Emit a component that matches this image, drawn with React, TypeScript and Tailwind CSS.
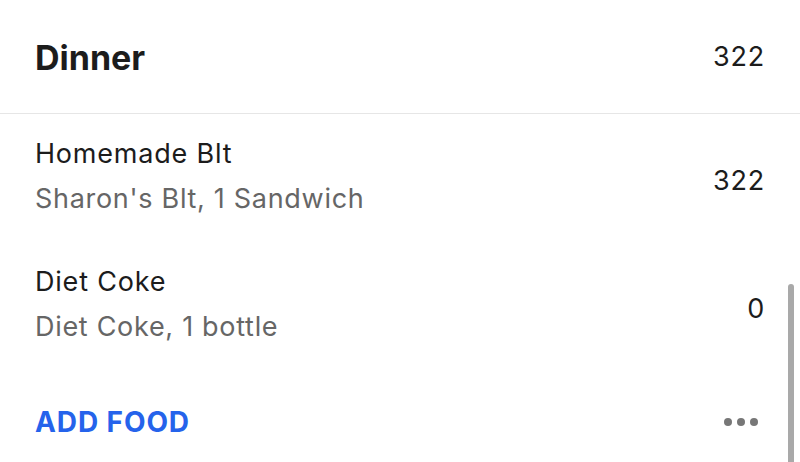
const items = [
  { name: "Homemade Blt", detail: "Sharon's Blt, 1 Sandwich", cals: 322 },
  { name: "Diet Coke", detail: "Diet Coke, 1 bottle", cals: 0 },
];

const App = () => {
  return (
    <div
      className="relative h-[462px] w-[800px] overflow-hidden bg-white text-[#1c1c1c]"
      style={{ fontFamily: "Inter, 'Noto Sans', sans-serif" }}
    >
      <div className="flex h-[114px] items-center justify-between border-b border-[#e6e6e6] pl-[35px] pr-[35px] pt-[2px]">
        <h2 className="text-[34px] font-bold">Dinner</h2>
        <span className="text-[27px] tracking-[0.8px]">322</span>
      </div>

      <div className="flex flex-col">
        {items.map((item) => (
          <div
            key={item.name}
            className="flex h-[128px] items-center justify-between pb-[4px] pl-[35px] pr-[35px]"
          >
            <div className="flex flex-col gap-[13px]">
              <span className="text-[27px] leading-[32px] tracking-[0.8px]">
                {item.name}
              </span>
              <span className="text-[27px] leading-[32px] tracking-[0.7px] text-[#666666]">
                {item.detail}
              </span>
            </div>
            <span className="pt-[10px] text-[27px] tracking-[0.8px]">{item.cals}</span>
          </div>
        ))}
      </div>

      <div className="flex h-[100px] items-center justify-between pl-[35px] pr-[42px] pt-[4px]">
        <button className="text-[28px] font-bold tracking-[0.9px] text-[#2563eb]">
          ADD FOOD
        </button>
        <div className="flex gap-[5px]">
          <span className="h-[8px] w-[8px] rounded-full bg-[#777777]" />
          <span className="h-[8px] w-[8px] rounded-full bg-[#777777]" />
          <span className="h-[8px] w-[8px] rounded-full bg-[#777777]" />
        </div>
      </div>

      <div className="absolute right-[6px] top-[284px] h-[200px] w-[6px] rounded-full bg-[#a9a9a9]" />
    </div>
  );
};

export default App;
